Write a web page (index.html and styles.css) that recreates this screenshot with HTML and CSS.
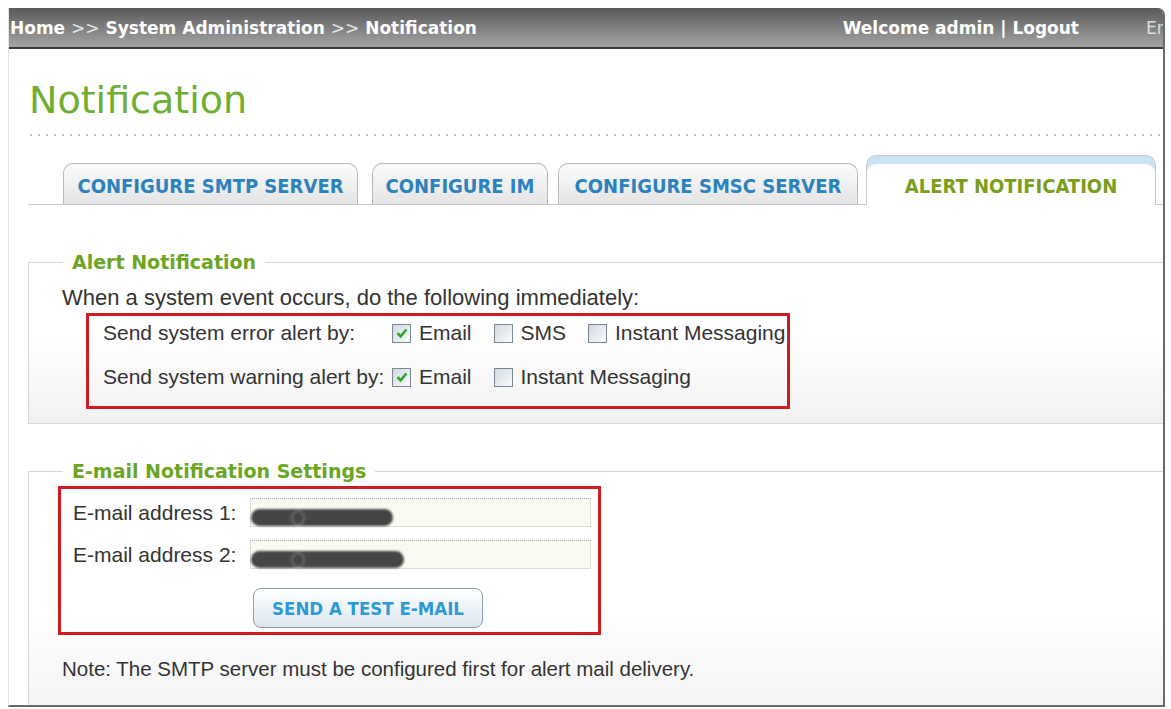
FILE: index.html
```html
<!DOCTYPE html>
<html lang="en">
<head>
    <meta charset="UTF-8">
    <meta name="viewport" content="width=device-width, initial-scale=1.0">
    <title>Notification</title>
    <link rel="stylesheet" href="styles.css">
</head>
<body>

<div class="frame">
    <div class="header">
        <div class="crumbs">Home <span class="sep">&gt;&gt;</span> System Administration <span class="sep">&gt;&gt;</span> Notification</div>
        <div class="user">Welcome admin | Logout</div>
        <div class="lang">English</div>
    </div>

    <h1 class="page-title">Notification</h1>
    <div class="dots"></div>

    <div class="content">
        <div class="tabs">
            <div class="tab tab-smtp">CONFIGURE SMTP SERVER</div>
            <div class="tab tab-im">CONFIGURE IM</div>
            <div class="tab tab-smsc">CONFIGURE SMSC SERVER</div>
            <div class="tab tab-alert active">ALERT NOTIFICATION</div>
        </div>

        <fieldset class="group">
            <legend>Alert Notification</legend>
            <p class="intro">When a system event occurs, do the following immediately:</p>
            <div class="red-box alert-box">
                <div class="opt-row">
                    <span class="opt-label">Send system error alert by:</span>
                    <span class="opt"><span class="cb checked"><svg viewBox="0 0 12 12"><path d="M2.2 6.2 L4.8 8.8 L9.8 3"/></svg></span>Email</span>
                    <span class="opt"><span class="cb"></span>SMS</span>
                    <span class="opt"><span class="cb"></span>Instant Messaging</span>
                </div>
                <div class="opt-row">
                    <span class="opt-label">Send system warning alert by:</span>
                    <span class="opt"><span class="cb checked"><svg viewBox="0 0 12 12"><path d="M2.2 6.2 L4.8 8.8 L9.8 3"/></svg></span>Email</span>
                    <span class="opt"><span class="cb"></span>Instant Messaging</span>
                </div>
            </div>
        </fieldset>

        <fieldset class="group group-mail">
            <legend>E-mail Notification Settings</legend>
            <div class="red-box mail-box">
                <div class="mail-grid">
                    <span class="mail-label">E-mail address 1:</span>
                    <div class="field"><span class="smudge smudge-1"><span class="ring"></span></span></div>
                    <span class="mail-label">E-mail address 2:</span>
                    <div class="field"><span class="smudge smudge-2"><span class="ring"></span></span></div>
                    <button class="test-btn">SEND A TEST E-MAIL</button>
                </div>
            </div>
            <p class="note">Note: The SMTP server must be configured first for alert mail delivery.</p>
        </fieldset>
    </div>
</div>

</body>
</html>
```

FILE: styles.css
```css
* {
    box-sizing: border-box;
}

body {
    margin: 0;
    background: #fff;
    font-family: "Liberation Sans", Arial, sans-serif;
    color: #333;
}

.frame {
    margin: 8px 0 0 8px;
    width: 1157px;
    height: 699px;
    border-left: 1px solid #e2e2e2;
    border-right: 2px solid #6b6b6b;
    border-bottom: 2px solid #6b6b6b;
    border-top-right-radius: 7px;
    overflow: hidden;
}

/* top bar */
.header {
    display: flex;
    align-items: center;
    height: 41px;
    padding-left: 1px;
    border-bottom: 2px solid #3a3a3a;
    background: linear-gradient(#595959, #a4a4a4);
    font-family: "DejaVu Sans", Verdana, sans-serif;
    font-weight: bold;
    font-size: 17px;
    color: #fff;
    white-space: nowrap;
}

.header .sep {
    font-weight: normal;
    color: #e4e4e4;
}

.user {
    margin-left: auto;
}

.lang {
    flex-shrink: 0;
    width: 17px;
    margin-left: 67px;
    overflow: hidden;
    font-weight: normal;
    color: #ddd;
}

.page-title {
    margin: 29px 0 0 20px;
    font-family: "DejaVu Sans", Verdana, sans-serif;
    font-weight: normal;
    font-size: 38px;
    line-height: 44px;
    color: #6fae2f;
}

.dots {
    margin: 12px 0 0 21px;
    height: 2px;
    background: repeating-linear-gradient(90deg, #c2c2c2 0 2px, transparent 2px 8px);
}

.content {
    padding-left: 19px;
}

/* tabs */
.tabs {
    display: flex;
    align-items: flex-end;
    height: 50px;
    margin-top: 19px;
    padding-left: 35px;
    border-bottom: 1px solid #c9c9c9;
}

.tab {
    height: 41px;
    padding-top: 10px;
    border: 1px solid #b9b9b9;
    border-bottom: none;
    border-radius: 10px 10px 0 0;
    background: linear-gradient(#fcfcfc, #e4e4e4);
    text-align: center;
    font-family: "DejaVu Sans Condensed", "DejaVu Sans", sans-serif;
    font-stretch: condensed;
    font-weight: bold;
    font-size: 20px;
    line-height: 24px;
    color: #2b82bd;
    white-space: nowrap;
}

.tab-smtp { width: 295px; margin-right: 14px; }
.tab-im { width: 176px; margin-right: 10px; }
.tab-smsc { width: 300px; margin-right: 8px; }
.tab-alert { width: 290px; }

.tab.active {
    height: 50px;
    margin-bottom: -1px;
    padding-top: 18px;
    border-color: #c4c9cc;
    background: #fff;
    box-shadow: inset 0 8px 0 #c9e3f5;
    color: #7a9d1c;
}

/* fieldsets */
.group {
    margin: 46px -30px 0 0;
    padding: 0 0 14px 33px;
    border: 1px solid #d6d6d6;
    background: linear-gradient(#fff 45%, #f1f1f1);
}

.group legend {
    margin-left: 1px;
    padding: 0 9px;
    font-family: "DejaVu Sans", Verdana, sans-serif;
    font-weight: bold;
    font-size: 19px;
    line-height: 22px;
    color: #6ba524;
}

.group-mail {
    margin-top: 36px;
    padding-bottom: 40px;
    background: linear-gradient(#fff 55%, #f2f2f2);
}

.intro {
    margin: 12px 0 0;
    font-size: 22px;
    line-height: 26px;
}

.red-box {
    border: 3px solid #cf1b22;
}

.alert-box {
    width: 704px;
    margin: 2px 0 0 24px;
    padding: 4px 0 16px 14px;
}

.opt-row {
    display: flex;
    align-items: center;
    height: 26px;
    font-size: 21px;
    white-space: nowrap;
}

.opt-row + .opt-row {
    margin-top: 18px;
}

.opt-label {
    flex-shrink: 0;
    width: 289px;
}

.opt {
    display: flex;
    flex-shrink: 0;
    align-items: center;
    margin-right: 22px;
}

.opt:last-child {
    margin-right: 0;
}

.cb {
    display: inline-flex;
    flex-shrink: 0;
    align-items: center;
    justify-content: center;
    width: 19px;
    height: 19px;
    margin-right: 8px;
    border: 1px solid #7b8794;
    background: linear-gradient(135deg, #d0d8e1, #fbfbfb);
}

.cb svg {
    width: 14px;
    height: 14px;
}

.cb path {
    fill: none;
    stroke: #2ea32e;
    stroke-width: 2.2;
}

/* e-mail settings */
.mail-box {
    width: 543px;
    margin: 4px 0 0 -4px;
    padding: 9px 0 4px 12px;
}

.mail-grid {
    display: grid;
    grid-template-columns: 177px 341px;
    row-gap: 13px;
    align-items: center;
    font-size: 21px;
}

.field {
    display: flex;
    align-items: flex-start;
    height: 29px;
    border: 1px solid #dcdcd2;
    border-top: 1px dotted #a8a8a8;
    background: #fafaf2;
}

.smudge {
    display: flex;
    align-items: center;
    height: 17px;
    margin-top: 10px;
    border-radius: 9px;
    background: #454545;
    filter: blur(1.3px);
}

.smudge-1 { width: 142px; }
.smudge-2 { width: 153px; }

.ring {
    width: 14px;
    height: 16px;
    margin-left: 40px;
    border: 2px solid #6a6a6a;
    border-radius: 50%;
}

.test-btn {
    grid-column: 2;
    width: 230px;
    height: 40px;
    margin: 6px 0 0 3px;
    border: 1px solid #8d9ea6;
    border-radius: 8px;
    background: linear-gradient(#fff, #dce8ef);
    font-family: "DejaVu Sans Condensed", "DejaVu Sans", sans-serif;
    font-stretch: condensed;
    font-weight: bold;
    font-size: 18.5px;
    color: #2d9ad5;
}

.note {
    margin: 22px 0 0;
    font-size: 20.5px;
    line-height: 24px;
}
```
